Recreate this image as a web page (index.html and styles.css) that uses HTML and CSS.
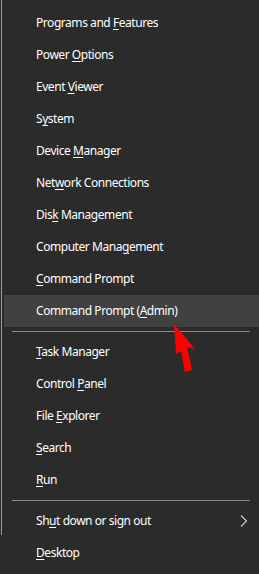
FILE: index.html
```html
<!DOCTYPE html>
<html lang="en">
<head>
    <meta charset="UTF-8">
    <title>Quick Link Menu</title>
    <link rel="stylesheet" href="styles.css">
</head>
<body>
    <div class="menu">
        <ul class="group">
            <li class="item">Programs and <u>F</u>eatures</li>
            <li class="item">Power <u>O</u>ptions</li>
            <li class="item">Event <u>V</u>iewer</li>
            <li class="item">S<u>y</u>stem</li>
            <li class="item">Device <u>M</u>anager</li>
            <li class="item">Net<u>w</u>ork Connections</li>
            <li class="item">Dis<u>k</u> Management</li>
            <li class="item">Computer Mana<u>g</u>ement</li>
            <li class="item"><u>C</u>ommand Prompt</li>
            <li class="item active">Command Prompt (<u>A</u>dmin)</li>
        </ul>
        <div class="separator"></div>
        <ul class="group">
            <li class="item"><u>T</u>ask Manager</li>
            <li class="item">Control <u>P</u>anel</li>
            <li class="item">File <u>E</u>xplorer</li>
            <li class="item"><u>S</u>earch</li>
            <li class="item"><u>R</u>un</li>
        </ul>
        <div class="separator"></div>
        <ul class="group">
            <li class="item submenu">
                <span>Sh<u>u</u>t down or sign out</span>
                <svg class="chevron" width="8" height="14" viewBox="0 0 8 14">
                    <path d="M1 1.5 L6.5 7 L1 12.5" fill="none" stroke="#c8c8c8" stroke-width="1.2"/>
                </svg>
            </li>
            <li class="item"><u>D</u>esktop</li>
        </ul>
    </div>

    <!-- red pointer drawn over the menu -->
    <svg class="pointer" width="30" height="52" viewBox="0 0 30 52">
        <polygon points="2,0 23,25 15,23 20,46 13,48 9,27 4,30" fill="#f00"/>
    </svg>
</body>
</html>
```

FILE: styles.css
```css
* {
    margin: 0;
    padding: 0;
    box-sizing: border-box;
}

body {
    background-color: #2b2b2b;
    color: #fff;
    font-family: "Noto Sans", "Open Sans", sans-serif;
    font-size: 12px;
    letter-spacing: -0.45px;
    width: 259px;
    height: 574px;
    overflow: hidden;
    position: relative;
}

.menu {
    position: relative;
    padding: 7px 0 0 4px;
}

.menu::before {
    content: "";
    position: absolute;
    left: 1px;
    top: 0;
    width: 1px;
    height: 535px;
    background-color: #9d9d9d;
}

.group {
    list-style: none;
}

.item {
    height: 32px;
    line-height: 32px;
    padding-left: 32px;
    white-space: nowrap;
}

.item u {
    text-decoration-thickness: 1px;
    text-underline-offset: 2px;
}

.item.active {
    background-color: #414141;
}

.submenu {
    display: flex;
    justify-content: space-between;
    align-items: center;
    padding-right: 11px;
}

.chevron {
    display: block;
}

.separator {
    height: 9px;
    margin: 0 9px 0 8px;
    display: flex;
    align-items: center;
}

.separator::after {
    content: "";
    display: block;
    width: 100%;
    height: 1px;
    background-color: #8a8a8a;
}

.pointer {
    position: absolute;
    left: 172px;
    top: 324px;
}
```
